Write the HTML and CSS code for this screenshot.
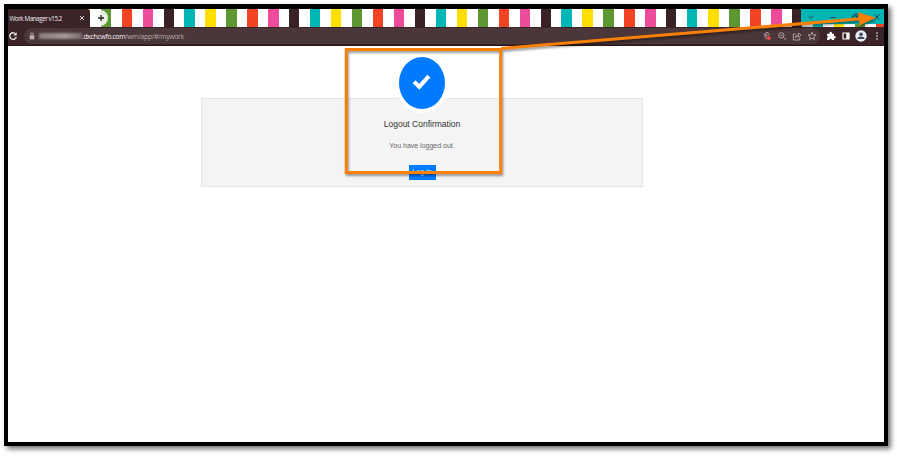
FILE: index.html
```
<!DOCTYPE html>
<html lang="en">
<head>
<meta charset="utf-8">
<title>Work Manager v15.2</title>
<link rel="stylesheet" href="styles.css">
</head>
<body>
<div class="window">
  <div class="tabs">
    <div class="tab"><span class="tab-title">Work Manager v15.2</span>
      <svg class="tab-close" viewBox="0 0 6 6"><path d="M1 1l4 4M5 1L1 5"/></svg>
    </div>
    <div class="new-tab"><svg viewBox="0 0 8 8"><path d="M4 1v6M1 4h6"/></svg></div>
    <div class="controls">
      <svg viewBox="0 0 8 8"><path d="M1.5 3L4 5.3 6.500 3"/></svg>
      <svg viewBox="0 0 8 8"><path d="M1.500 4.500h5"/></svg>
      <svg viewBox="0 0 8 8"><path d="M1.500 3h4v4h-4zM3 2.500q0-1.500 1.500-1.500h1q1.500 0 1.500 1.500v1.500q0 1-1 1"/></svg>
      <svg viewBox="0 0 8 8"><path d="M1.500 1.500l5 5M6.500 1.500l-5 5"/></svg>
    </div>
  </div>
  <div class="toolbar">
    <svg class="reload" viewBox="0 0 10 10"><path d="M7.800 3.200A3.300 3.300 0 1 0 8.300 5.800"/><path class="solid" d="M8.700 1.200v3.400H5.300z"/></svg>
    <div class="address">
      <svg class="lock" viewBox="0 0 6 8"><path class="solid" d="M.7 3.300h4.600v4H.7z"/><path d="M1.800 3.500V2q0-1.200 1.200-1.200T4.200 2v1.500"/></svg>
      <span class="redacted"></span>
      <span class="url"><b>.dxchcwfo.com</b>/wm/app/#/mywork</span>
      <div class="page-actions">
        <svg viewBox="0 0 10 10"><path d="M3.200 4.300a2 2 0 1 1 3.500 0M3 3v3.200l1.500 2M4.800 2.800v3"/><circle class="red" cx="6.800" cy="7" r="2"/></svg>
        <svg viewBox="0 0 10 10"><circle cx="4.300" cy="4.300" r="2.700"/><path d="M6.300 6.300L9 9M3 4.300h2.600"/></svg>
        <svg viewBox="0 0 10 10"><path d="M3.500 3H1.300v6h6.400V7M3.300 6.700q.3-3 3.200-3V2L9 4.200 6.500 6.300V5q-2 0-3.200 1.700z"/></svg>
        <svg viewBox="0 0 10 10"><path d="M5 1.200l1.100 2.600 2.800.2-2.200 1.800.7 2.800L5 7.100 2.600 8.600l.7-2.800L1.100 4l2.800-.2z"/></svg>
      </div>
    </div>
    <div class="extensions">
      <svg viewBox="0 0 10 10"><path class="solid" d="M1 2.700h2.500V2a1.200 1.200 0 0 1 2.400 0v.7H8V5h.5a1.200 1.200 0 0 1 0 2.400H8V9H5.800a1.200 1.200 0 0 0-2.400 0H1V6.800A1.200 1.200 0 0 0 1 4.500z"/></svg>
      <svg viewBox="0 0 10 10"><path class="panel" d="M2 2h6v6H2z"/><path class="solid" d="M5.300 2H8v6H5.300z"/></svg>
      <svg class="avatar" viewBox="0 0 12 12"><circle class="disc" cx="6" cy="6" r="5.700"/><circle class="person" cx="6" cy="4.200" r="1.800"/><path class="person" d="M2.500 9V8Q3 6.500 6 6.500T9.500 8v1z"/></svg>
      <svg class="menu" viewBox="0 0 4 10"><circle class="solid" cx="2" cy="2" r=".8"/><circle class="solid" cx="2" cy="5" r=".8"/><circle class="solid" cx="2" cy="8" r=".8"/></svg>
    </div>
  </div>
  <main class="page">
    <section class="card">
      <div class="badge"><svg viewBox="0 0 18 16"><path d="M2 8.300L6.900 13 16 3"/></svg></div>
      <h1>Logout Confirmation</h1>
      <p>You have logged out.</p>
      <a class="login">Log In</a>
    </section>
  </main>
</div>
<svg class="callout" viewBox="0 0 897 456">
  <path class="box" d="M346.300 49.400h154.400v123.200H346.300z"/>
  <path class="line" d="M501 48.500L861 18.800"/>
  <path class="head" d="M858 12.300L876 17.800 859.500 25.500z"/>
</svg>
</body>
</html>
```
FILE: styles.css
```
* { box-sizing: border-box; }
html { background: #fff; }
body { margin: 0; height: 456px; padding: 4px 0 0 4px; font-family: "Liberation Sans", sans-serif; overflow: hidden; }
svg { display: block; fill: none; stroke: currentColor; flex: none; }
.solid { fill: currentColor; stroke: none; }

.window {
  width: 884px; height: 441.500px;
  border: 4px solid #000; border-top-width: 5px;
  box-shadow: 3px 3px 5px rgba(0, 0, 0, .55);
  display: flex; flex-direction: column; background: #fff;
}

.tabs {
  height: 18px; flex: none; display: flex;
  background: repeating-linear-gradient(90deg,
    #382226 0 10.1px, #fff 10.1px 20.700px,
    #00b7b5 20.700px 31px, #fff 31px 41.700px,
    #ffdf00 41.700px 52.200px, #fff 52.200px 62.700px,
    #5d9732 62.700px 73.200px, #fff 73.200px 83.700px,
    #f24424 83.700px 94.200px, #fff 94.200px 104.700px,
    #ef4b9b 104.700px 115.200px, #fff 115.200px 125.700px);
  background-position: -95.900px 0;
  background-size: 1257px 100%;
}
.tab {
  width: 82px; background: #3b2428; color: #eee; border-radius: 0 3px 0 0;
  display: flex; align-items: center; justify-content: space-between; padding: 0 5px 0 1.500px;
}
.tab-title { font: 6.300px "Open Sans", sans-serif; white-space: nowrap; letter-spacing: -.44px; }
.tab-close { width: 6px; height: 6px; stroke-width: .9; }
.new-tab {
  width: 17px; height: 16px; margin: 1px 0 0 1px; border-radius: 8px;
  background: rgba(255, 255, 255, .85); color: #222;
  display: flex; align-items: center; justify-content: center; padding-left: 2px;
}
.new-tab svg { width: 8px; height: 8px; stroke-width: 1.3; }
.controls {
  margin-left: auto; width: 83px; height: 15px; background: #00b5b2; color: #234;
  display: flex; align-items: center; justify-content: space-between; padding: 0 3px 0 6px;
}
.controls svg { width: 8px; height: 8px; stroke-width: .9; }

.toolbar {
  height: 19px; flex: none; background: #3a2428; color: #eee; border-bottom: 1px solid #291619;
  display: flex; align-items: center;
}
.reload { width: 10px; height: 10px; stroke-width: 1.3; }
.address {
  margin-left: 6px; width: 796px; height: 16px; border-radius: 8px; background: #4b3639;
  display: flex; align-items: center; padding: 0 3px 0 5px;
}
.lock { width: 6px; height: 8px; color: #bbb0b2; stroke-width: .9; }
.redacted { width: 43px; height: 6px; margin-left: 4px; background: linear-gradient(90deg, #8b7d80, #a4999b 60%, #79696c); filter: blur(1px); }
.url { font: 7px "Open Sans", sans-serif; letter-spacing: -.42px; color: #b5a9ab; white-space: nowrap; }
.url b { font-weight: 400; color: #f3eff0; }
.page-actions { margin-left: auto; display: flex; gap: 5px; color: #c5babc; }
.page-actions svg { width: 10px; height: 10px; stroke-width: .8; }
.red { fill: #e34b45; stroke: none; }
.extensions { margin-left: 6px; display: flex; align-items: center; color: #fff; }
.extensions svg { width: 10px; height: 10px; }
.extensions svg + svg { margin-left: 5px; }
.panel { stroke-width: 1.2; }
.extensions .avatar { width: 12px; height: 12px; margin-left: 4px; }
.disc { fill: #e8edf6; stroke: none; }
.person { fill: #3c4658; stroke: none; }
.extensions .menu { width: 4px; margin-left: 8px; }

.page { flex: 1; padding-top: 51.500px; }
.card {
  width: 442px; height: 89px; margin-left: 193px;
  background: #f4f4f4; border: 1px solid #e5e5e5;
  display: flex; flex-direction: column; align-items: center;
}
.badge {
  width: 54px; height: 60px; margin: -46px 1px 0 0; border-radius: 50%; flex: none;
  border: 4px solid #fff; background: #007bff; color: #fff;
  display: flex; align-items: center; justify-content: center;
}
.badge svg { width: 19px; height: 17px; stroke-width: 3.800; margin-top: -3px; }
h1 { margin: 5.500px 0 0; font-size: 8.500px; line-height: 12px; font-weight: 400; color: #333; white-space: nowrap; }
p { margin: 11px 0 0; font-size: 7px; line-height: 10px; color: #666; white-space: nowrap; }
.login {
  width: 27px; height: 15px; margin-top: 13.500px; flex: none; background: #007bff; color: #d5e8ff;
  font-size: 7px; line-height: 14px; text-align: center;
}

.callout { position: absolute; left: 0; top: 0; width: 897px; height: 456px; filter: drop-shadow(1px 2px 1px rgba(0, 0, 0, .4)); }
.box { stroke: #fb8005; stroke-width: 3; }
.line { stroke: #fb8005; stroke-width: 3; }
.head { fill: #fb8005; stroke: none; }
```
